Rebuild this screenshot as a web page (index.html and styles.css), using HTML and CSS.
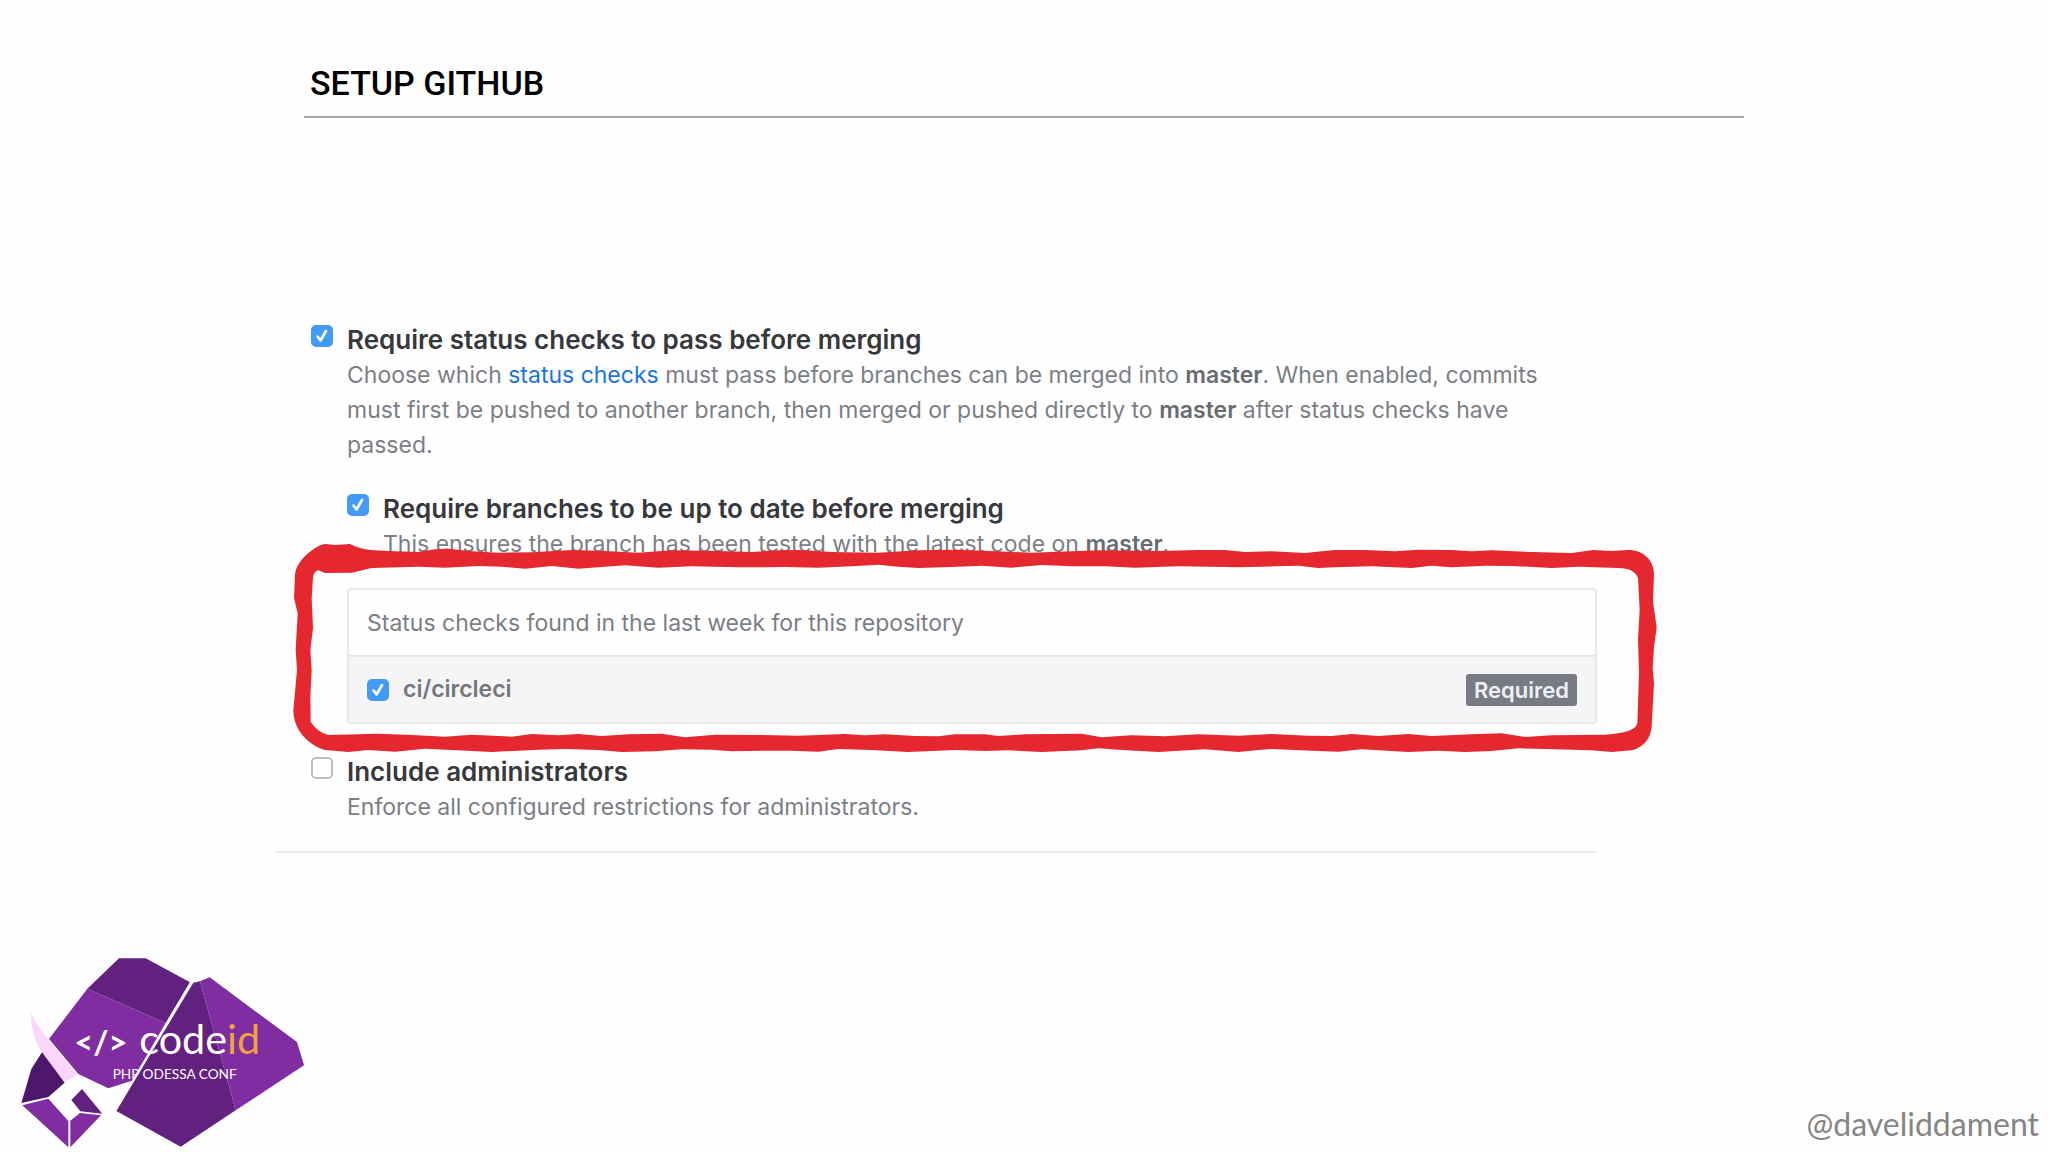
FILE: index.html
```html
<!DOCTYPE html>
<html lang="en">
<head>
    <meta charset="UTF-8">
    <meta name="viewport" content="width=device-width, initial-scale=1.0">
    <title>Setup GitHub</title>
    <link rel="stylesheet" href="styles.css">
</head>
<body>
    <div class="slide">
        <header class="slide-header">
            <h1>SETUP GITHUB</h1>
        </header>

        <main class="settings">
            <form>
                <div class="option">
                    <input type="checkbox" id="statusChecks" checked>
                    <div class="option-body">
                        <label for="statusChecks">Require status checks to pass before merging</label>
                        <p>Choose which <a href="#">status checks</a> must pass before branches can be merged into <strong>master</strong>. When enabled, commits must first be pushed to another branch, then merged or pushed directly to <strong>master</strong> after status checks have passed.</p>
                    </div>
                </div>

                <div class="option nested">
                    <input type="checkbox" id="upToDate" checked>
                    <div class="option-body">
                        <label for="upToDate">Require branches to be up to date before merging</label>
                        <p>This ensures the branch has been tested with the latest code on <strong>master</strong>.</p>
                    </div>
                </div>

                <div class="checks">
                    <div class="checks-title">Status checks found in the last week for this repository</div>
                    <div class="checks-row">
                        <input type="checkbox" id="circleci" checked>
                        <label for="circleci">ci/circleci</label>
                        <span class="badge">Required</span>
                    </div>
                    <!-- red marker outline -->
                    <svg class="marker" viewBox="0 0 4200 660" aria-hidden="true">
                        <path fill-rule="evenodd" d="M30 105 C32 65 85 18 120 12 L150 15 L195 12 Q225 28 265 31 L330 34 L400 36 L450 28 L490 26 L560 34 L640 38 L740 37 L860 30 L960 33 L1060 38 L1160 31 L1300 33 L1400 36 L1480 31 L1540 30 L1640 36 L1780 38 L1900 31 L2020 29 L2130 34 L2240 38 L2360 34 L2440 31 L2620 33 L2740 30 L2820 30 L2880 36 L2960 34 L3060 39 L3110 34 L3150 30 L3240 30 L3330 34 L3400 29 L3500 30 L3560 34 L3620 31 L3740 36 L3860 39 L3925 30 L3980 33 L4030 30 C4075 30 4105 60 4107 100 L4104 185 L4115 262 L4107 320 L4103 385 L4107 430 L4100 560 C4095 605 4070 622 4040 631 L3980 636 L3920 631 L3780 627 L3700 625 L3620 633 L3540 636 L3460 632 L3370 636 L3230 628 L3160 635 L3100 633 L2960 627 L2920 630 L2860 636 L2760 628 L2620 636 L2500 629 L2440 625 L2390 631 L2270 636 L2170 631 L2100 633 L2010 630 L1870 636 L1760 630 L1660 627 L1600 635 L1520 632 L1440 632 L1340 634 L1280 629 L1190 628 L1110 634 L1010 636 L940 630 L840 627 L760 629 L620 636 L500 630 L420 626 L330 635 L250 630 L190 636 L120 630 C70 615 25 570 25 510 L36 390 L32 330 L38 220 L27 175 Z
                        M84 110 L80 175 L84 265 L76 330 L80 390 L76 470 L77 545 Q95 575 130 585 L280 581 L380 585 L480 590 L560 584 L680 590 L740 582 L820 586 L880 582 L950 588 L1030 583 L1130 581 L1200 592 L1290 584 L1420 585 L1540 587 L1680 582 L1740 586 L1800 583 L1890 588 L1960 589 L2010 583 L2100 583 L2140 588 L2220 583 L2390 581 L2450 592 L2540 586 L2640 589 L2740 583 L2860 587 L2960 582 L3070 587 L3140 588 L3200 582 L3280 588 L3370 582 L3440 588 L3560 583 L3650 580 L3720 591 L3800 586 L3960 584 Q4050 580 4057 550 L4062 400 L4059 300 L4064 210 L4059 115 Q4050 85 4000 84 L3880 80 L3800 84 L3680 78 L3600 77 L3500 82 L3440 77 L3380 84 L3260 79 L3150 82 L3100 84 L3040 77 L2970 79 L2860 82 L2680 79 L2550 83 L2460 79 L2360 79 L2270 75 L2180 83 L2090 77 L2000 81 L1900 84 L1840 80 L1780 74 L1700 79 L1600 83 L1500 81 L1360 82 L1220 79 L1120 83 L1020 76 L940 82 L880 86 L800 78 L720 86 L650 80 L580 78 L480 83 L400 80 L260 84 L200 98 L120 99 L100 91 Q88 94 84 110 Z"/>
                    </svg>
                </div>

                <div class="option">
                    <input type="checkbox" id="admins">
                    <div class="option-body">
                        <label for="admins">Include administrators</label>
                        <p>Enforce all configured restrictions for administrators.</p>
                    </div>
                </div>
            </form>
        </main>

        <footer class="slide-footer">
            <svg class="logo" viewBox="0 0 960 636" role="img" aria-label="codeid PHP Odessa Conf">
                <path fill="#62207f" d="M357 55 H437 L570 127 L497 249 L262 146 Z"/>
                <path fill="#7f2da0" d="M262 146 L497 249 L400 421 L325 445 L235 402 L147 297 Z"/>
                <path fill="#62207f" d="M580 128 L600 124 L707 511 L542 620 L349 513 Z"/>
                <path fill="#7f2da0" d="M600 124 L629 112 L891 306 L912 376 L707 511 Z"/>
                <path fill="#fbd5fc" d="M93 219 C112 265 172 330 231 405 L195 426 C150 375 92 315 93 219 Z"/>
                <path fill="#4d176b" d="M126 337 L194 428 L145 471 L64 489 L94 387 Z"/>
                <path fill="#7f2da0" d="M67 496 L145 476 L205 543 V622 Z M211 622 V542 L240 519 L303 526 Z"/>
                <path fill="#62207f" d="M246 447 L307 521 L241 514 L214 480 Z"/>
                <text class="logo-code" x="223" y="342">&lt;/&gt;</text>
                <text class="logo-name" x="418" y="342">code<tspan>id</tspan></text>
                <text class="logo-conf" x="338" y="416">PHP ODESSA CONF</text>
                <path stroke="#fff" stroke-width="6" d="M577 121 L398 424"/>
            </svg>
            <span class="handle">@daveliddament</span>
        </footer>
    </div>
</body>
</html>
```
FILE: styles.css
```css
body {
    font-family: Inter, "Liberation Sans", sans-serif;
    background-color: #fefefe;
    margin: 0;
}
.slide {
    display: flex;
    flex-direction: column;
    min-height: 100vh;
}
.slide-header {
    margin: 0 304px;
    padding: 63px 6px 13px;
    border-bottom: 2px solid #a6a6a6;
}
h1 {
    font-family: Roboto, sans-serif;
    font-size: 34px;
    font-weight: 500;
    line-height: 40px;
    color: #000;
    margin: 0;
}
.settings {
    margin: 204px 451px 0 275px;
    padding: 0 0 26px 36px;
    border-bottom: 2px solid #ececef;
}
.option {
    display: flex;
    gap: 14px;
}
.option.nested {
    margin: 28px 0 26px 36px;
}
.option-body {
    flex: 1;
}
label {
    display: block;
    font-size: 26px;
    font-weight: 600;
    line-height: 36px;
    color: #35383c;
}
p {
    font-size: 23px;
    line-height: 35px;
    color: #7b7f85;
    margin: 0;
}
strong {
    font-weight: 600;
    color: #686c72;
}
a {
    color: #1c74dc;
    text-decoration: none;
}
input {
    appearance: none;
    flex: none;
    width: 22px;
    height: 22px;
    margin: 3px 0 0;
    border: 2px solid #bdbdbf;
    border-radius: 5px;
    background-color: #fff;
}
input:checked {
    border-color: #429bf7;
    background: #429bf7 url("data:image/svg+xml,%3Csvg xmlns='http://www.w3.org/2000/svg' viewBox='0 0 18 18'%3E%3Cpath d='M4.500 9.500l3 4L13 4' fill='none' stroke='white' stroke-width='2.600' stroke-linecap='round' stroke-linejoin='round'/%3E%3C/svg%3E") center / 18px 18px no-repeat;
}
.checks {
    position: relative;
    margin: 0 0 30px 36px;
    border: 2px solid #e8e8ec;
    border-radius: 4px;
}
.checks-title {
    padding: 16px 18px 14px;
    font-size: 23px;
    line-height: 35px;
    color: #7b7f85;
}
.checks-row {
    display: flex;
    align-items: center;
    gap: 14px;
    padding: 15px 18px;
    border-top: 2px solid #e8e8ec;
    background-color: #f5f4f7;
}
.checks-row input {
    margin: 0;
}
.checks-row label {
    font-size: 23px;
    line-height: 35px;
    color: #74777b;
}
.badge {
    margin-left: auto;
    padding: 0 8px;
    border-radius: 3px;
    font-size: 22px;
    font-weight: 600;
    line-height: 32px;
    color: #eef0f6;
    background-color: #777b84;
}
/* hand-drawn outline over the checks box */
.marker {
    position: absolute;
    top: -50px;
    left: -64px;
    width: 1400px;
    height: 220px;
    fill: #e5282f;
    pointer-events: none;
}
.slide-footer {
    display: flex;
    justify-content: space-between;
    align-items: flex-end;
    margin-top: auto;
}
.logo {
    display: block;
    width: 320px;
    height: 212px;
}
.logo text {
    font-family: Lato, sans-serif;
    fill: #fff;
}
.logo .logo-code {
    font-size: 98px;
    font-weight: 700;
}
.logo .logo-name {
    font-size: 124px;
}
.logo .logo-name tspan {
    fill: #f0a33a;
}
.logo .logo-conf {
    font-size: 41px;
}
.handle {
    padding: 0 9px 9px;
    font-family: Lato, sans-serif;
    font-size: 32px;
    line-height: 38px;
    color: #858585;
}
```
